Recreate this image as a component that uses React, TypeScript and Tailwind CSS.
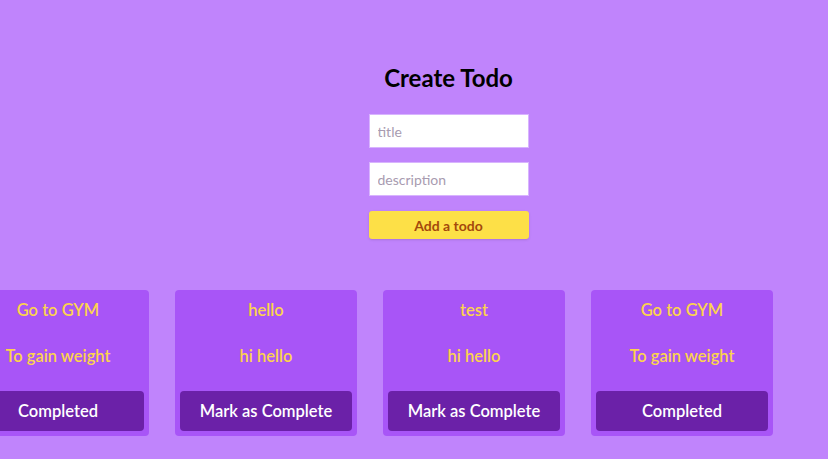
const todos = [
  { title: "Go to GYM", description: "To gain weight", completed: true },
  { title: "hello", description: "hi hello", completed: false },
  { title: "test", description: "hi hello", completed: false },
  { title: "Go to GYM", description: "To gain weight", completed: true },
];

function CreateTodo() {
  return (
    <div className="flex flex-col items-center pl-[69px]">
      <h1 className="text-[24px] leading-8 font-bold text-black">Create Todo</h1>
      <input
        type="text"
        placeholder="title"
        className="mt-5 w-[160px] h-[34px] px-2 bg-white border border-[#d8b4fe] text-[14px] text-gray-800 placeholder:text-[#a89bb0] outline-none"
      />
      <input
        type="text"
        placeholder="description"
        className="mt-[14px] w-[160px] h-[34px] px-2 bg-white border border-[#d8b4fe] text-[14px] text-gray-800 placeholder:text-[#a89bb0] outline-none"
      />
      <button className="mt-[15px] w-[160px] h-[28px] rounded-[3px] bg-[#fde047] text-[#a4490c] text-[14px] font-bold shadow-sm">
        Add a todo
      </button>
    </div>
  );
}

function TodoCard({ title, description, completed }: { title: string; description: string; completed: boolean }) {
  return (
    <div className="shrink-0 w-[182px] h-[146px] rounded-[4px] bg-[#a855f7] px-[5px] pt-2 pb-[5px] flex flex-col">
      <div className="text-center text-[16.5px] leading-6 font-semibold text-[#fcd34d]">{title}</div>
      <div className="mt-[22px] text-center text-[16.5px] leading-6 font-semibold text-[#fcd34d]">{description}</div>
      <button className="mt-auto h-[40px] w-full rounded-[4px] bg-[#6b21a8] text-white text-[16.5px] font-semibold">
        {completed ? "Completed" : "Mark as Complete"}
      </button>
    </div>
  );
}

export default function App() {
  return (
    <div className="w-[828px] h-[459px] overflow-hidden bg-[#c084fc] pt-[62px] font-['Lato',sans-serif]">
      <CreateTodo />
      <div className="mt-[51px] -ml-[33px] flex gap-[26px]">
        {todos.map((todo, i) => (
          <TodoCard key={i} {...todo} />
        ))}
      </div>
    </div>
  );
}
